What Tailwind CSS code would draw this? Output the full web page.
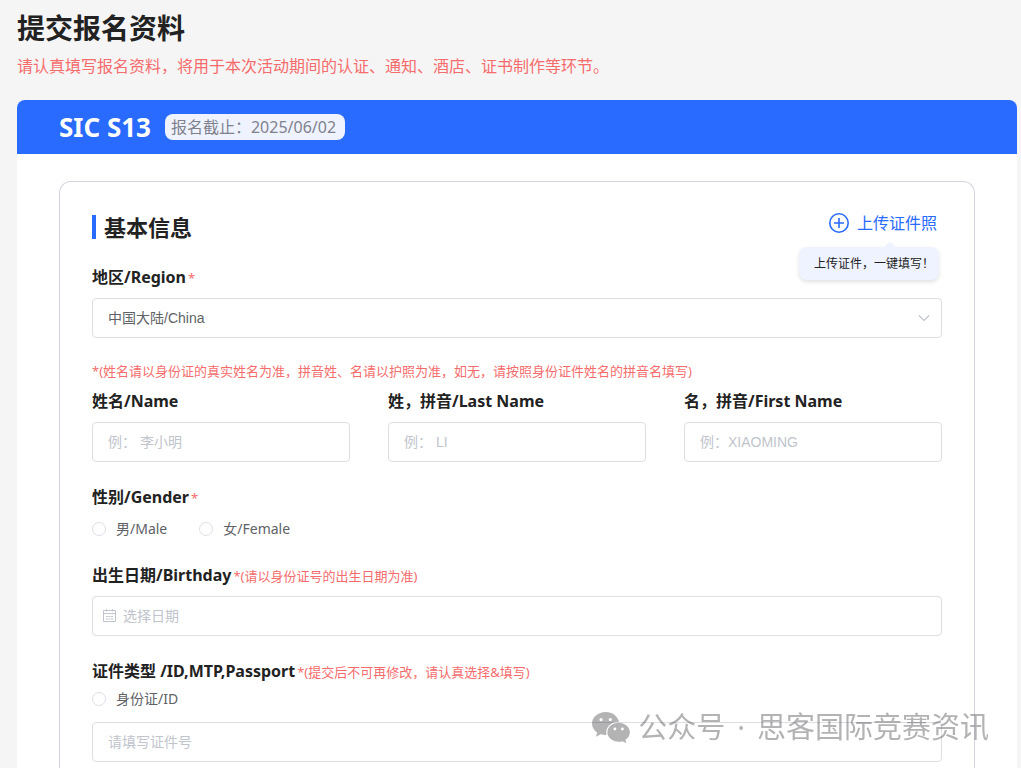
<!DOCTYPE html>
<html lang="zh-CN">
<head>
<meta charset="utf-8">
<meta name="viewport" content="width=device-width, initial-scale=1">
<title>提交报名资料</title>
<script src="https://cdn.jsdelivr.net/npm/@tailwindcss/browser@4"></script>
</head>
<body class="flex min-h-screen flex-col overflow-x-hidden bg-[#f5f5f5] pr-1 pl-[17px] font-['Noto_Sans','Noto_Sans_CJK_SC',sans-serif] text-[#222]">
  <header class="pt-2">
    <h1 class="text-[28px] leading-10 font-bold">提交报名资料</h1>
    <p class="mt-1.5 text-base leading-6 text-[#f56c6c]">请认真填写报名资料，将用于本次活动期间的认证、通知、酒店、证书制作等环节。</p>
  </header>

  <main class="mt-[22px] flex grow flex-col bg-white rounded-t-lg">
    <div class="flex h-[54px] items-center gap-3.5 rounded-t-lg bg-[#296bff] px-[42px]">
      <h2 class="text-[26px] leading-9 font-bold text-white">SIC S13</h2>
      <span class="rounded-lg bg-[#eff3ff] pr-[9px] pl-1.5 text-base leading-[26px] text-[#7f828c]">报名截止：2025/06/02</span>
    </div>

    <form class="mx-[42px] mt-[27px] grow rounded-t-xl border border-b-0 border-[#d1d3df] px-8 pt-[33px] pb-1.5">
      <div class="relative flex items-start justify-between">
        <h3 class="flex items-center gap-2 text-[22px] leading-6 font-bold"><span class="h-6 w-1 bg-[#296bff]"></span>基本信息</h3>
        <button type="button" class="mr-[5px] -mt-1 flex items-center gap-2 text-base leading-6 text-[#296bff]">
          <svg class="size-5" viewBox="0 0 20 20" fill="none" stroke="currentColor" stroke-width="1.6" aria-hidden="true"><circle cx="10" cy="10" r="9.2"/><path d="M10 5v10M5 10h10"/></svg>
          上传证件照
        </button>
        <div role="tooltip" class="absolute top-8 right-[3px] rounded-lg bg-[#eff3ff] pr-[5px] pl-[15px] text-xs leading-[33px] shadow-[0_2px_4px_rgba(0,0,0,0.12)]">
          <span class="absolute -top-1 left-[87px] size-2 rotate-45 rounded-tl-xs bg-[#eff3ff]"></span>
          <span class="relative">上传证件，一键填写！</span>
        </div>
      </div>

      <label for="region" class="mt-[26px] block h-6 leading-6 font-bold">地区/Region<span class="ml-0.5 text-[13px] font-normal text-[#f56c6c]">*</span></label>
      <div class="relative mt-[9px]">
        <select id="region" class="block h-10 w-full appearance-none rounded border border-[#dcdfe6] bg-white px-[15px] font-['Liberation_Sans','Noto_Sans_CJK_SC',sans-serif] text-sm text-[#606266]">
          <option>中国大陆/China</option>
        </select>
        <svg class="pointer-events-none absolute top-3.5 right-3 h-3 w-3" viewBox="0 0 12 12" fill="none" stroke="#c0c4cc" stroke-width="1.2" aria-hidden="true"><path d="M1 3.500l5 5 5-5"/></svg>
      </div>

      <p class="mt-[23px] text-[13px] leading-5 text-[#f56c6c]">*(姓名请以身份证的真实姓名为准，拼音姓、名请以护照为准，如无，请按照身份证件姓名的拼音名填写)</p>
      <div class="mt-2 grid grid-cols-3 gap-[38px]">
        <div>
          <label for="name" class="block h-6 leading-6 font-bold">姓名/Name</label>
          <input id="name" type="text" placeholder="例： 李小明" class="mt-[9px] block h-10 w-full rounded border border-[#dcdfe6] px-[15px] font-['Liberation_Sans','Noto_Sans_CJK_SC',sans-serif] text-sm text-[#606266] placeholder:text-[#c0c4cc]">
        </div>
        <div>
          <label for="last" class="block h-6 leading-6 font-bold">姓，拼音/Last Name</label>
          <input id="last" type="text" placeholder="例： LI" class="mt-[9px] block h-10 w-full rounded border border-[#dcdfe6] px-[15px] font-['Liberation_Sans','Noto_Sans_CJK_SC',sans-serif] text-sm text-[#606266] placeholder:text-[#c0c4cc]">
        </div>
        <div>
          <label for="first" class="block h-6 leading-6 font-bold">名，拼音/First Name</label>
          <input id="first" type="text" placeholder="例：XIAOMING" class="mt-[9px] block h-10 w-full rounded border border-[#dcdfe6] px-[15px] font-['Liberation_Sans','Noto_Sans_CJK_SC',sans-serif] text-sm text-[#606266] placeholder:text-[#c0c4cc]">
        </div>
      </div>

      <fieldset class="mt-[23px]">
        <legend class="h-6 leading-6 font-bold">性别/Gender<span class="ml-0.5 text-[13px] font-normal text-[#f56c6c]">*</span></legend>
        <div class="mt-2.5 flex gap-8 text-sm leading-5 text-[#606266]">
          <label class="flex items-center gap-2.5"><input type="radio" name="gender" class="size-3.5 appearance-none rounded-full border border-[#dcdfe6] bg-white checked:border-4 checked:border-[#296bff]">男/Male</label>
          <label class="flex items-center gap-2.5"><input type="radio" name="gender" class="size-3.5 appearance-none rounded-full border border-[#dcdfe6] bg-white checked:border-4 checked:border-[#296bff]">女/Female</label>
        </div>
      </fieldset>

      <label for="birthday" class="mt-6 block h-6 leading-6 font-bold">出生日期/Birthday<span class="ml-0.5 text-[13px] font-normal text-[#f56c6c]">*(请以身份证号的出生日期为准)</span></label>
      <div class="relative mt-[9px]">
        <input id="birthday" type="text" placeholder="选择日期" class="block h-10 w-full rounded border border-[#dcdfe6] pr-[15px] pl-[30px] font-['Liberation_Sans','Noto_Sans_CJK_SC',sans-serif] text-sm text-[#606266] placeholder:text-[#c0c4cc]">
        <svg class="pointer-events-none absolute top-[13px] left-[11px] size-3.5" viewBox="0 0 14 14" fill="none" stroke="#c0c4cc" aria-hidden="true"><path d="M.5 1.500h12v11H.5zM.5 4.500h12M3.500 0v2.500M9.500 0v2.500M3 7.500h2M5.500 7.500h2M8 7.500h2M3 10h2M5.500 10h2M8 10h2"/></svg>
      </div>

      <fieldset class="mt-[23px]">
        <legend class="h-6 leading-6 font-bold">证件类型 /ID,MTP,Passport<span class="ml-0.5 text-[13px] font-normal text-[#f56c6c]">*(提交后不可再修改，请认真选择&amp;填写)</span></legend>
        <div class="mt-1.5 flex text-sm leading-5 text-[#606266]">
          <label class="flex items-center gap-2.5"><input type="radio" name="idtype" class="size-3.5 appearance-none rounded-full border border-[#dcdfe6] bg-white checked:border-4 checked:border-[#296bff]">身份证/ID</label>
        </div>
      </fieldset>
      <input type="text" aria-label="证件号" placeholder="请填写证件号" class="mt-[13px] block h-10 w-full rounded border border-[#dcdfe6] px-[15px] font-['Liberation_Sans','Noto_Sans_CJK_SC',sans-serif] text-sm text-[#606266] placeholder:text-[#c0c4cc]">
    </form>
  </main>

  <div class="pointer-events-none fixed right-8 bottom-5 flex items-center gap-2 text-[29px] leading-[42px] text-[#b3b3b3] mix-blend-multiply font-['Noto_Sans','Noto_Sans_CJK_SC',sans-serif]">
    <svg class="h-8 w-[38px]" viewBox="0 0 39 31" fill="currentColor" aria-hidden="true">
      <path fill-rule="evenodd" d="M14 0C6.300 0 0 5.300 0 12c0 3.800 2 7 5.300 9.200L4 25.500l5-2.600c1.800.5 4 .8 6 .7-2-7 4-13.600 12.700-13.500C26.500 4.200 20.800 0 14 0zM9.300 6.200a1.700 1.700 0 1 1 0 3.400 1.700 1.700 0 0 1 0-3.400zm9.500 0a1.700 1.700 0 1 1 0 3.400 1.700 1.700 0 0 1 0-3.400z"/>
      <path fill-rule="evenodd" d="M27.300 11.200c-6.400 0-11.500 4.400-11.500 9.800s5.100 9.700 11.500 9.700c1.500 0 2.800-.2 4-.6l4 2-1-3.500c2.800-1.800 4.600-4.500 4.600-7.600 0-5.400-5.200-9.800-11.600-9.800zM23.500 16.100a1.500 1.500 0 1 1 0 3 1.500 1.500 0 0 1 0-3zm7.700 0a1.500 1.500 0 1 1 0 3 1.500 1.500 0 0 1 0-3z"/>
    </svg>
    <span class="flex gap-3"><span>公众号</span><span>·</span><span>思客国际竞赛资讯</span></span>
  </div>
</body>
</html>
